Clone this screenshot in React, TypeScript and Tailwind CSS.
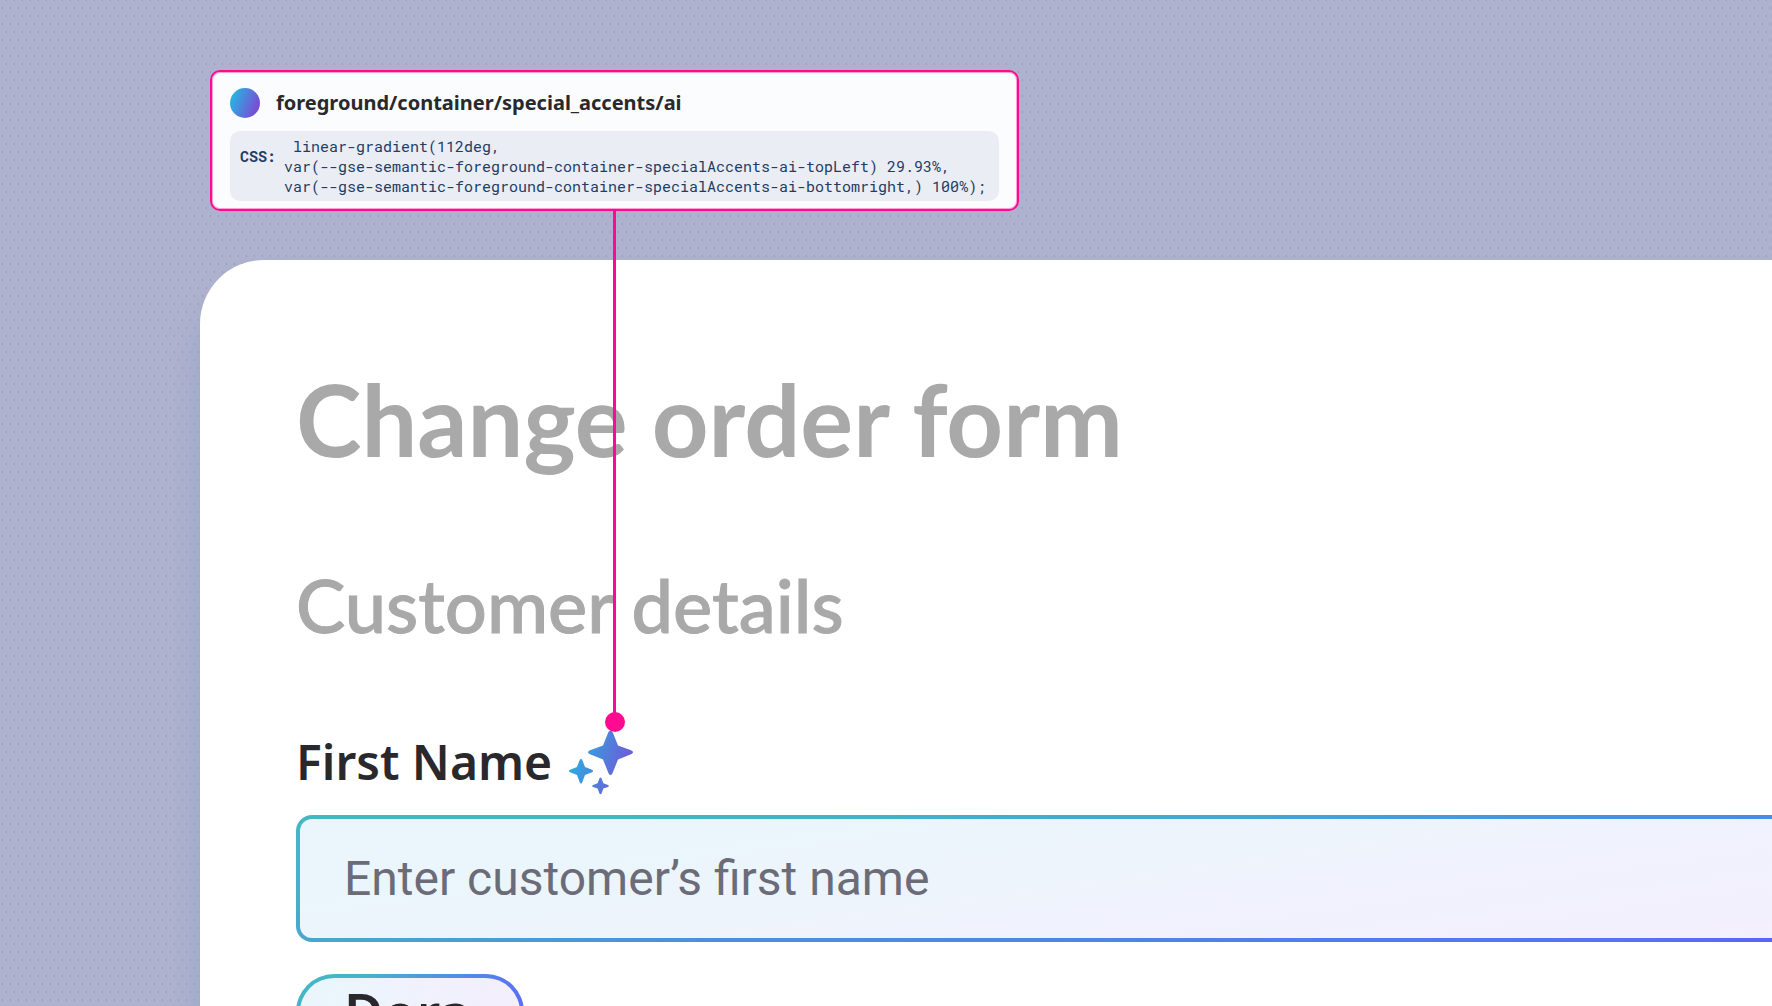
import React, { useState } from "react";

const CODE_LINES = [
  " linear-gradient(112deg,",
  "var(--gse-semantic-foreground-container-specialAccents-ai-topLeft) 29.93%,",
  "var(--gse-semantic-foreground-container-specialAccents-ai-bottomright,) 100%);",
];

const DotPattern = () => (
  <svg className="absolute inset-0 -z-10 h-full w-full" aria-hidden="true">
    <defs>
      <pattern id="dots" width="8" height="16" patternUnits="userSpaceOnUse">
        <rect x="6" y="0" width="1" height="1" fill="#979cba" />
        <rect x="6" y="15" width="1" height="1" fill="#979cba" />
        <rect x="2" y="7" width="1" height="2" fill="#979cba" />
      </pattern>
    </defs>
    <rect width="100%" height="100%" fill="url(#dots)" />
  </svg>
);

const Sparkles = () => (
  <svg viewBox="0 0 66 66" className="size-[66px] shrink-0" aria-hidden="true">
    <defs>
      <linearGradient id="ai" gradientUnits="userSpaceOnUse" x1="2" y1="22" x2="64" y2="44">
        <stop offset="0" stopColor="#27b3e2" />
        <stop offset="1" stopColor="#7551d6" />
      </linearGradient>
    </defs>
    <g fill="url(#ai)">
      <path d="M42.5 1.5Q44 1.5 44.8 3.5L50 16.5L63 21.3Q65 22.2 65 23.3Q65 24.4 63 25.2L50 30.5L44.8 43.5Q44 46 42.5 46Q41 46 40.2 43.5L35 30.5L22 25.2Q20 24.4 20 23.3Q20 22.2 22 21.3L35 16.5L40.2 3.5Q41 1.5 42.5 1.5Z" />
      <path d="M13 30Q14 30 14.4 31.2L17 38L24 40.8Q25 41.3 25 42Q25 42.7 24 43.2L17 46L14.4 53Q14 54.5 13 54.5Q12 54.5 11.6 53L9 46L2 43.2Q1 42.7 1 42Q1 41.3 2 40.8L9 38L11.6 31.2Q12 30 13 30Z" />
      <path d="M32.5 48.5Q33.3 48.5 33.6 49.5L35.4 54.2L40 56.1Q40.8 56.5 40.8 57Q40.8 57.5 40 57.9L35.4 59.6L33.6 64.2Q33.3 65.2 32.5 65.2Q31.7 65.2 31.4 64.2L29.6 59.6L25 57.9Q24.2 57.5 24.2 57Q24.2 56.5 25 56.1L29.6 54.2L31.4 49.5Q31.7 48.5 32.5 48.5Z" />
    </g>
  </svg>
);

const TokenCard = () => (
  <section className="relative z-10 ml-[210px] w-[809px] max-w-full rounded-[10px] border-2 border-[#ff0a91] bg-[#fbfcfe] px-[18px] pt-4 pb-2 shadow-[inset_0_0_0_1px_#ff9fd2]">
    <div className="flex items-center gap-4">
      <span className="size-[30px] rounded-full bg-[linear-gradient(112deg,#25b8e3_10%,#7551d6_80%)]" />
      <h3 className="font-['Noto_Sans',sans-serif] text-[20px] leading-[30px] font-bold text-[#29292d]">
        foreground/container/special_accents/ai
      </h3>
    </div>
    <div className="mt-[13px] flex gap-2 rounded-[10px] bg-[#eaedf4] py-[5px] pl-[10px] font-['Roboto_Mono','DejaVu_Sans_Mono',monospace] text-[15px] leading-5 text-[#243b63]">
      <span className="pt-[10px] font-bold">CSS:</span>
      <code className="font-['Roboto_Mono','DejaVu_Sans_Mono',monospace] whitespace-pre">
        {CODE_LINES.join("\n")}
      </code>
    </div>
    {/* Connector start */}
    <div className="absolute top-full left-[401px] h-[515px] w-[3px] bg-[#ff0a91]">
      <span className="absolute -bottom-2 -left-2 size-5 rounded-full bg-[#ff0a91]" />
    </div>
    {/* Connector end */}
  </section>
);

export default function App() {
  const [name, setName] = useState("");

  return (
    <main className="relative isolate h-screen overflow-hidden bg-[#aeb2ce] pt-[70px]">
      <DotPattern />
      <TokenCard />

      {/* Order form */}
      <form className="mt-[49px] -mr-20 ml-[200px] min-h-screen rounded-tl-[64px] bg-white pt-[101px] pr-12 pl-24 shadow-[0_32px_32px_#98a6c6]">
        <h1 className="font-['Lato',sans-serif] text-[99px] leading-[116px] font-bold text-[#a9a9a9]">
          Change order form
        </h1>
        <h2 className="mt-[84px] font-['Lato',sans-serif] text-[74px] leading-[88px] font-medium text-[#a9a9a9] [-webkit-text-stroke:1px_#a9a9a9]">
          Customer details
        </h2>
        <div className="mt-20 flex items-center gap-4">
          <label
            htmlFor="firstName"
            className="font-['Noto_Sans',sans-serif] text-[48px] leading-[66px] font-semibold text-[#29292d]"
          >
            First Name
          </label>
          <Sparkles />
        </div>
        <input
          id="firstName"
          type="text"
          value={name}
          onChange={(e) => setName(e.target.value)}
          placeholder="Enter customer’s first name"
          className="mt-5 block h-[127px] w-full rounded-2xl border-4 border-transparent px-11 font-['Roboto',sans-serif] text-[48px] text-[#29292d] outline-none [background:linear-gradient(172deg,#eaf6fc_16%,#edf4fc_45%,#f1f1fd_75%,#f4effd)_padding-box,linear-gradient(172deg,#45b6c6_14%,#48a5d0_40%,#4a90dc_54%,#4d88e4_68%,#5672f6_92%,#5a60fa)_border-box] placeholder:text-[#6b6c78]"
        />
        <button
          type="button"
          onClick={() => setName("Dora")}
          className="mt-8 block h-[76px] w-[228px] rounded-full border-4 border-transparent px-11 text-left font-['Noto_Sans',sans-serif] text-[54px] leading-[68px] font-semibold text-[#29292d] [background:linear-gradient(112deg,#eaf6fc_10%,#f3effd_80%)_padding-box,linear-gradient(112deg,#45b6c6_25%,#5a70f8_90%)_border-box]"
        >
          Dora
        </button>
      </form>
    </main>
  );
}
